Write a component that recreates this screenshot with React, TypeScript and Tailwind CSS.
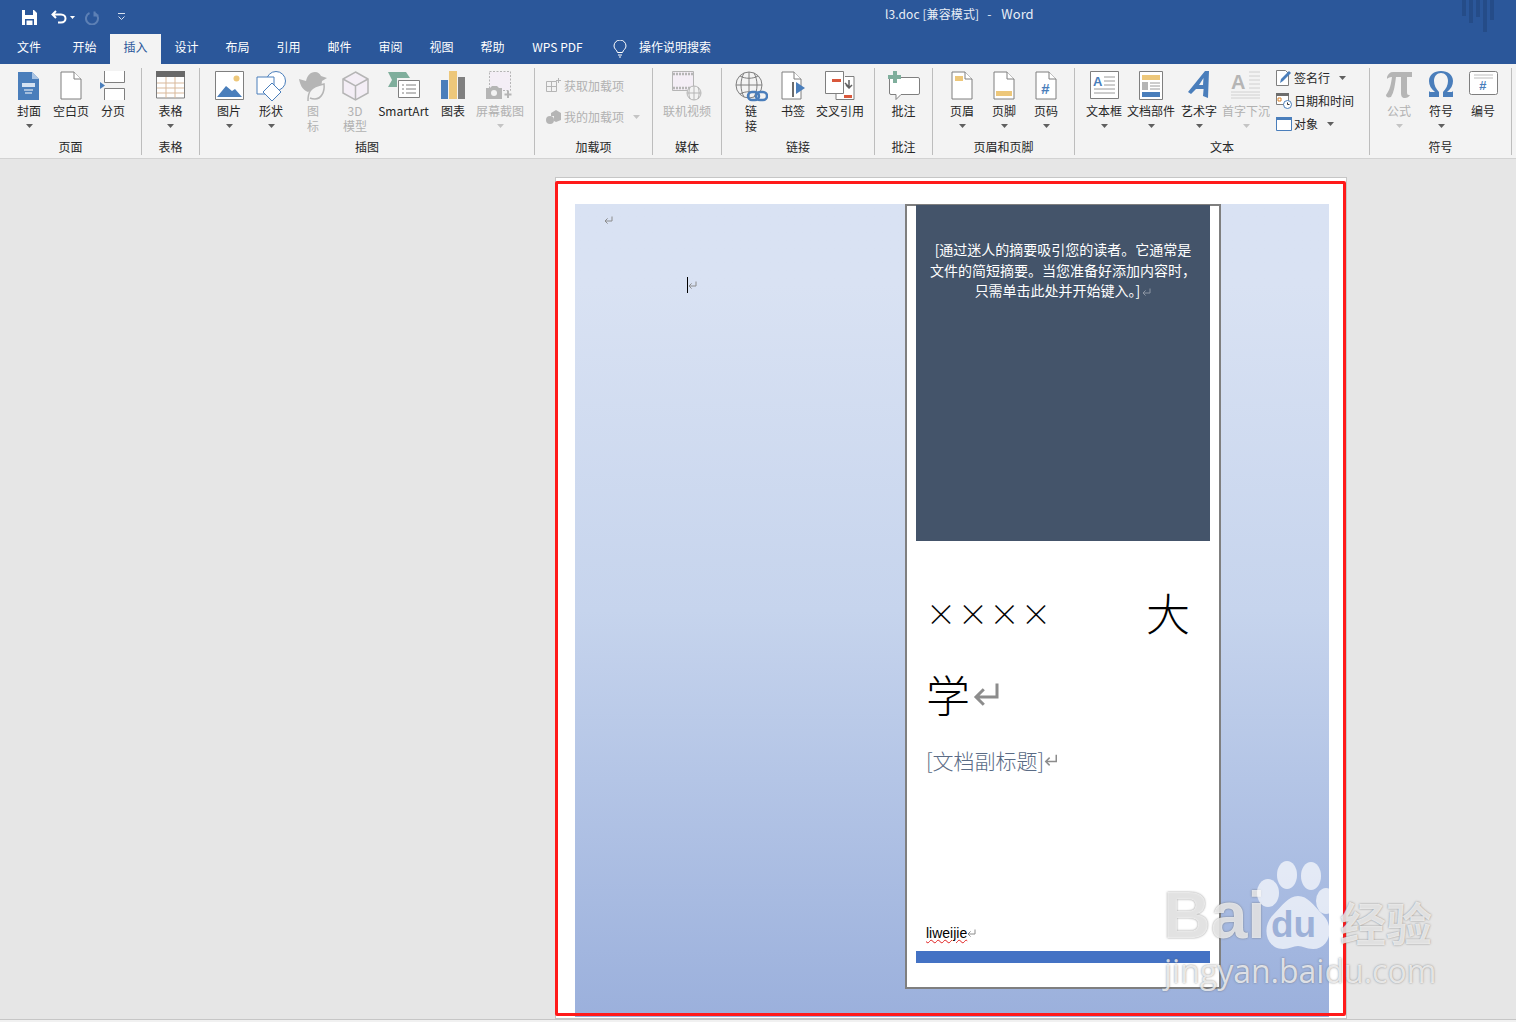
import React from 'react';

const FONT = '"Noto Sans CJK SC", "Noto Sans", sans-serif';

function Caret({ off }: { off?: boolean }) {
  return (
    <svg width="7" height="4" viewBox="0 0 7 4" className="block">
      <path d="M0 0h7L3.5 4z" fill={off ? '#c4c4c4' : '#5f5f5f'} />
    </svg>
  );
}

function ReturnMark({ w = 9, h = 8, color = '#8c8c8c', sw = 1 }: { w?: number; h?: number; color?: string; sw?: number }) {
  return (
    <svg width={w} height={h} viewBox="0 0 9 8" className="block shrink-0">
      <path d="M8 0.5V5H1.2M3.6 2.4L1 5l2.6 2.6" fill="none" stroke={color} strokeWidth={sw} />
    </svg>
  );
}

interface RibbonButtonProps {
  icon: React.ReactNode;
  label: string[];
  caret?: boolean;
  off?: boolean;
  className: string;
}

function RibbonButton({ icon, label, caret, off, className }: RibbonButtonProps) {
  return (
    <div className={`flex flex-col items-center ${className}`}>
      <div className="h-[32px] flex items-start justify-center">{icon}</div>
      {label.map((line) => (
        <div key={line} className={`text-[12px] leading-[15px] whitespace-nowrap ${off ? 'text-[#b1b1b1]' : 'text-[#262626]'}`}>
          {line}
        </div>
      ))}
      {caret && (
        <div className="mt-[6px]">
          <Caret off={off} />
        </div>
      )}
    </div>
  );
}

function Group({ label, className, children }: { label: string; className: string; children: React.ReactNode }) {
  return (
    <div className={`mt-[4px] h-[87px] flex flex-col shrink-0 border-r border-[#bdbdbd] ${className}`}>
      <div className="h-[71px] pt-[3px] flex">{children}</div>
      <div className="h-[16px] text-center text-[12px] leading-[16px] text-[#262626]">{label}</div>
    </div>
  );
}

const P = { s: '#7f7f7f', b: '#4a7ebb', o: '#edc77a', r: '#d9583c', g: '#b5b5b5', t: '#7fae9c' };

function Page({ children, fill = 'white', stroke = P.s }: { children?: React.ReactNode; fill?: string; stroke?: string }) {
  return (
    <svg width="22" height="29" viewBox="0 0 22 29">
      <path d="M1 1h13l7 7v20H1z" fill={fill} stroke={stroke} />
      <path d="M14 1v7h7" fill="white" stroke={stroke} />
      {children}
    </svg>
  );
}

const icons = {
  cover: (
    <svg width="22" height="29" viewBox="0 0 22 29">
      <path d="M0 1h14l7 7v21H0z" fill={P.b} />
      <path d="M14 1v7h7z" fill="#a9c4e4" />
      <path d="M4 12h13v4H4z" fill="#d5e2f2" />
      <path d="M6 19h9M7 22h7" stroke="white" />
    </svg>
  ),
  breakPage: (
    <svg width="26" height="29" viewBox="0 0 26 29">
      <path d="M4.500 0v11.500h20V0M4.500 29V17.500h20V29" fill="white" stroke={P.s} />
      <path d="M0 11l5 3.500L0 18z" fill={P.b} />
    </svg>
  ),
  table: (
    <svg width="29" height="28" viewBox="0 0 29 28">
      <path d="M.5 1h28v26H.5z" fill="white" stroke={P.s} />
      <path d="M0 0h29v6H0z" fill="#696969" />
      <path d="M1 12h27M1 17h27M1 22h27M10 6v21M19 6v21" stroke="#d9b99b" />
    </svg>
  ),
  picture: (
    <svg width="29" height="29" viewBox="0 0 29 29">
      <path d="M.5.500h28v28H.5z" fill="white" stroke={P.s} />
      <circle cx="21.500" cy="7.500" r="3" fill={P.o} />
      <path d="M2 26l9-11 6 5 3-2 7 8z" fill={P.b} />
    </svg>
  ),
  shapes: (
    <svg width="30" height="31" viewBox="0 0 30 31" fill="white" stroke={P.b}>
      <circle cx="20" cy="10" r="9.500" />
      <path d="M1 6h17v17H1z" />
      <path d="M16 12l9 9-9 9-9-9z" />
    </svg>
  ),
  icons3: (
    <svg width="29" height="31" viewBox="0 0 29 31">
      <path d="M0 8l7 2c1-5 4-9 9-9 3 0 5 2 6 4l6 2-5 3c0 4-2 7-5 9l-4-1-5 3C3 19 1 13 0 8z" fill={P.g} />
      <path d="M9 30c0-8 1-14 16-17 1 8-3 15-9 15-2 0-4-.500-5-1" fill="#f3f3f3" stroke={P.g} strokeWidth="1.500" />
    </svg>
  ),
  cube: (
    <svg width="27" height="30" viewBox="0 0 27 30" fill="#f4eef6" stroke={P.g} strokeWidth="1.500">
      <path d="M13.500 1L26 8v14l-12.500 7L1 22V8z" />
      <path d="M1 8l12.500 7L26 8M13.500 15v14" fill="none" />
    </svg>
  ),
  smartart: (
    <svg width="32" height="28" viewBox="0 0 32 28">
      <path d="M0 1h18l4 6H9v9H0l4-7z" fill={P.t} />
      <path d="M10.500 9.500h21v17h-21z" fill="white" stroke={P.s} />
      <path d="M14 14h2M18 14h10M14 18h2M18 18h10M14 22h2M18 22h10" stroke={P.s} />
    </svg>
  ),
  chart: (
    <svg width="24" height="28" viewBox="0 0 24 28">
      <path d="M0 9h7v19H0z" fill={P.b} />
      <path d="M8 0h8v28H8z" fill={P.o} />
      <path d="M17 6h7v22h-7z" fill="#7f7f7f" />
    </svg>
  ),
  shot: (
    <svg width="29" height="29" viewBox="0 0 29 29">
      <path d="M3.500.5h21v19h-21z" fill="#f4eef6" stroke={P.g} strokeDasharray="2 1.500" />
      <path d="M0 17h4l2-2h5l2 2h3v11H0z" fill={P.g} />
      <circle cx="8" cy="22" r="3" fill="#f3f3f3" />
      <path d="M22 20v7M18.500 23.500h7" stroke={P.g} strokeWidth="2" />
    </svg>
  ),
  video: (
    <svg width="30" height="30" viewBox="0 0 30 30">
      <path d="M.5.500h21v19H.5z" fill="#f4eef6" stroke={P.g} />
      <path d="M1 3h20M1 17h20" stroke={P.g} strokeWidth="2.500" strokeDasharray="2 1" />
      <circle cx="22" cy="22" r="7" fill="#f3f3f3" stroke={P.g} />
      <path d="M15 22h14M22 15v14M18 16c-1.500 4-1.500 8 0 12M26 16c1.500 4 1.500 8 0 12" fill="none" stroke={P.g} />
    </svg>
  ),
  link: (
    <svg width="33" height="32" viewBox="0 0 33 32">
      <circle cx="14" cy="14" r="13" fill="#f3f3f3" stroke={P.s} />
      <path d="M1 14h26M14 1v26M5 5c5 3 13 3 18 0M5 23c5-3 13-3 18 0M9 2c-4 7-4 17 0 24M19 2c4 7 4 17 0 24" fill="none" stroke={P.s} />
      <rect x="13" y="21" width="11" height="8" rx="4" fill="none" stroke={P.b} strokeWidth="2.500" />
      <rect x="21" y="21" width="11" height="8" rx="4" fill="none" stroke={P.b} strokeWidth="2.500" />
    </svg>
  ),
  bookmark: (
    <svg width="25" height="29" viewBox="0 0 25 29">
      <path d="M1 1h12l7 7v20H1z" fill="white" stroke={P.s} />
      <path d="M13 1v7h7" fill="white" stroke={P.s} />
      <path d="M12 11v15" stroke="#6d6d6d" strokeWidth="2" />
      <path d="M15 11l9 6-9 6z" fill={P.b} />
    </svg>
  ),
  cross: (
    <svg width="30" height="29" viewBox="0 0 30 29">
      <path d="M20 5.500h9v23H11v-6" fill="white" stroke={P.s} />
      <path d="M.5.500h18v22H.5z" fill="white" stroke={P.s} />
      <path d="M7 8h9v3H7zM19 24h8v3h-8z" fill={P.r} />
      <path d="M20 12l4 4 0-7M21 14l3 3 3-3" fill="none" stroke="#606060" strokeWidth="1.500" />
    </svg>
  ),
  comment: (
    <svg width="32" height="30" viewBox="0 0 32 30">
      <path d="M3 6.500h27a1.500 1.500 0 0 1 1.500 1.500v14a1.500 1.500 0 0 1-1.500 1.500H13l-5 5v-5H3A1.500 1.500 0 0 1 1.500 22V8A1.500 1.500 0 0 1 3 6.500z" fill="white" stroke={P.s} />
      <path d="M5 0h4v4h4v4H9v4H5V8H0V4h5z" fill={P.t} />
    </svg>
  ),
  textbox: (
    <svg width="29" height="28" viewBox="0 0 29 28">
      <path d="M.5.500h28v27H.5z" fill="white" stroke={P.s} />
      <path d="M14 6h11M14 10h11M14 14h11M4 18h21M4 22h21" stroke="#9a9a9a" />
      <text x="3" y="15" fontSize="13" fontFamily="Liberation Sans" fontWeight="700" fill={P.b}>A</text>
    </svg>
  ),
  parts: (
    <svg width="24" height="29" viewBox="0 0 24 29">
      <path d="M.5.500h23v28H.5z" fill="white" stroke={P.s} />
      <path d="M3 4h18v5H3z" fill={P.o} />
      <path d="M3 11h6v8H3z" fill={P.g} />
      <path d="M11 12h10M11 15h10M11 18h10" stroke="#9a9a9a" />
      <path d="M3 21h18v5H3z" fill={P.b} />
    </svg>
  ),
  wordart: (
    <svg width="22" height="28" viewBox="0 0 22 28">
      <path d="M17 0h4l-1 27-5-2 .600-7H8l-5 5-3-2zM15.500 7L11 14h4z" fill={P.b} />
    </svg>
  ),
  dropcap: (
    <svg width="30" height="29" viewBox="0 0 30 29">
      <text x="0" y="18" fontSize="20" fontFamily="Liberation Sans" fontWeight="700" fill={P.g}>A</text>
      <path d="M18 1h11M18 5h11M18 9h11M18 13h11M18 17h11M0 21h29M0 24h29M0 27h29" stroke="#d0d0d0" />
    </svg>
  ),
  pi: (
    <svg width="26" height="27" viewBox="0 0 26 27">
      <path d="M1 6c1-3 3-5 6-5h19v5h-5v15c0 3 1 3 3 3-1 2-3 3-5 3-3 0-4-2-4-5V6h-5c-1 8-2 15-5 20-3 1-5 0-5-2 4-5 5-11 6-18-3 0-4 1-5 2z" fill={P.g} />
    </svg>
  ),
  omega: (
    <svg width="26" height="27" viewBox="0 0 26 27">
      <path d="M1 26v-6l1 1h5C3 18 1 14 1 10 1 4 6 0 13 0s12 4 12 10c0 4-2 8-6 11h5l1-1v6H15v-5c3-3 5-7 5-11 0-5-3-8-7-8s-7 3-7 8c0 4 2 8 5 11v5z" fill={P.b} />
    </svg>
  ),
  number: (
    <svg width="29" height="24" viewBox="0 0 29 24">
      <rect x=".5" y=".5" width="28" height="23" rx="2" fill="white" stroke={P.s} />
      <path d="M5 4h19M5 7h19" stroke="#bdbdbd" />
      <text x="10" y="19" fontSize="13" fontFamily="Liberation Sans" fontWeight="700" fontStyle="italic" fill={P.b}>#</text>
    </svg>
  ),
};

function StackRow({ icon, label, caret, off, gap }: { icon: React.ReactNode; label: string; caret?: boolean; off?: boolean; gap: string }) {
  return (
    <div className="flex items-center h-[23px]">
      <div className="w-[17px] flex justify-center shrink-0">{icon}</div>
      <span className={`ml-[2px] text-[12px] whitespace-nowrap ${off ? 'text-[#b1b1b1]' : 'text-[#262626]'}`}>{label}</span>
      {caret && (
        <span className={gap}>
          <Caret off={off} />
        </span>
      )}
    </div>
  );
}

function Ribbon() {
  return (
    <div className="h-[95px] bg-[#f3f3f3] border-b border-[#d2d2d2] flex">
      <Group label="页面" className="w-[142px]">
        <div className="flex pl-[8px]">
          <RibbonButton className="w-[42px]" icon={icons.cover} label={['封面']} caret />
          <RibbonButton className="w-[42px]" icon={<Page />} label={['空白页']} />
          <RibbonButton className="w-[42px]" icon={icons.breakPage} label={['分页']} />
        </div>
      </Group>
      <Group label="表格" className="w-[58px]">
        <RibbonButton className="w-[57px]" icon={icons.table} label={['表格']} caret />
      </Group>
      <Group label="插图" className="w-[335px]">
        <div className="flex pl-[8px]">
          <RibbonButton className="w-[42px]" icon={icons.picture} label={['图片']} caret />
          <RibbonButton className="w-[42px]" icon={icons.shapes} label={['形状']} caret />
          <RibbonButton className="w-[42px]" icon={icons.icons3} label={['图', '标']} off />
          <RibbonButton className="w-[42px]" icon={icons.cube} label={['3D', '模型']} off />
          <RibbonButton className="w-[55px]" icon={icons.smartart} label={['SmartArt']} />
          <RibbonButton className="w-[44px]" icon={icons.chart} label={['图表']} />
          <RibbonButton className="w-[50px]" icon={icons.shot} label={['屏幕截图']} caret off />
        </div>
      </Group>
      <Group label="加载项" className="w-[118px]">
        <div className="pl-[10px] pt-[3px] flex flex-col gap-[8px]">
          <StackRow
            off
            gap=""
            label="获取加载项"
            icon={
              <svg width="15" height="15" viewBox="0 0 15 15" fill="none" stroke={P.g}>
                <path d="M.5 3.500h10v10H.5zM5.500 3.500v10M.5 8.500h10M12.500 0v5M10 2.500h5" />
              </svg>
            }
          />
          <StackRow
            off
            caret
            gap="ml-[9px]"
            label="我的加载项"
            icon={
              <svg width="15" height="14" viewBox="0 0 15 14" fill={P.g}>
                <path d="M5 3l5-3 5 3v7l-5 2-2-1V6H5z" />
                <circle cx="4" cy="10" r="4" />
              </svg>
            }
          />
        </div>
      </Group>
      <Group label="媒体" className="w-[69px]">
        <RibbonButton className="w-[68px]" icon={icons.video} label={['联机视频']} off />
      </Group>
      <Group label="链接" className="w-[153px]">
        <div className="flex pl-[8px]">
          <RibbonButton className="w-[42px]" icon={icons.link} label={['链', '接']} />
          <RibbonButton className="w-[42px]" icon={icons.bookmark} label={['书签']} />
          <RibbonButton className="w-[52px]" icon={icons.cross} label={['交叉引用']} />
        </div>
      </Group>
      <Group label="批注" className="w-[58px]">
        <RibbonButton className="w-[57px]" icon={icons.comment} label={['批注']} />
      </Group>
      <Group label="页眉和页脚" className="w-[142px]">
        <div className="flex pl-[8px]">
          <RibbonButton
            className="w-[42px]"
            caret
            label={['页眉']}
            icon={
              <Page>
                <path d="M4 5h8v5H4z" fill={P.o} />
              </Page>
            }
          />
          <RibbonButton
            className="w-[42px]"
            caret
            label={['页脚']}
            icon={
              <Page>
                <path d="M3 20h16v5H3z" fill={P.o} />
              </Page>
            }
          />
          <RibbonButton
            className="w-[42px]"
            caret
            label={['页码']}
            icon={
              <Page>
                <text x="6" y="23" fontSize="15" fontFamily="Liberation Sans" fontWeight="700" fontStyle="italic" fill={P.b}>#</text>
              </Page>
            }
          />
        </div>
      </Group>
      <Group label="文本" className="w-[295px]">
        <div className="flex pl-[8px]">
          <RibbonButton className="w-[42px]" icon={icons.textbox} label={['文本框']} caret />
          <RibbonButton className="w-[52px]" icon={icons.parts} label={['文档部件']} caret />
          <RibbonButton className="w-[44px]" icon={icons.wordart} label={['艺术字']} caret />
          <RibbonButton className="w-[50px]" icon={icons.dropcap} label={['首字下沉']} caret off />
          <div className="ml-[4px] -mt-[5px] flex flex-col">
            <StackRow
              caret
              gap="ml-[9px]"
              label="签名行"
              icon={
                <svg width="16" height="16" viewBox="0 0 16 16">
                  <path d="M.5.500h9l3 3v12H.5z" fill="white" stroke={P.s} />
                  <path d="M4 13l1-4 8-8 2 2-8 8z" fill={P.b} />
                </svg>
              }
            />
            <StackRow
              label="日期和时间"
              gap=""
              icon={
                <svg width="16" height="16" viewBox="0 0 16 16">
                  <path d="M.5.500h12v11H.5z" fill="white" stroke={P.s} />
                  <path d="M0 0h13v3H0z" fill="#6d6d6d" />
                  <path d="M2 5h3v3H2z" fill="none" stroke="#d9822b" />
                  <circle cx="11.500" cy="11.500" r="4" fill="white" stroke={P.b} />
                  <path d="M11.500 9.500v2h2" fill="none" stroke="#333" />
                </svg>
              }
            />
            <StackRow
              caret
              gap="ml-[9px]"
              label="对象"
              icon={
                <svg width="16" height="14" viewBox="0 0 16 14">
                  <path d="M.5.500h15v13H.5z" fill="white" stroke={P.b} />
                  <path d="M0 0h16v3H0z" fill={P.b} />
                </svg>
              }
            />
          </div>
        </div>
      </Group>
      <Group label="符号" className="w-[142px]">
        <div className="flex pl-[8px]">
          <RibbonButton className="w-[42px]" icon={icons.pi} label={['公式']} caret off />
          <RibbonButton className="w-[42px]" icon={icons.omega} label={['符号']} caret />
          <RibbonButton className="w-[42px]" icon={icons.number} label={['编号']} />
        </div>
      </Group>
    </div>
  );
}

function TitleBar() {
  const tabs = ['设计', '布局', '引用', '邮件', '审阅', '视图', '帮助'];
  return (
    <div className="h-[64px] bg-[#2b579a] text-white relative">
      <div className="h-[34px] flex items-center pl-[22px] relative">
        <svg width="15" height="15" viewBox="0 0 15 15">
          <path d="M0 0h12l3 3v12H0z" fill="white" />
          <path d="M3 0h8v5H3zM3 9h9v6H3z" fill="#2b579a" />
          <path d="M4.500 10.500h6v4.500h-6z" fill="white" />
        </svg>
        <svg width="17" height="14" viewBox="0 0 17 14" className="ml-[14px]" fill="none" stroke="white" strokeWidth="2">
          <path d="M5 1L1.500 4.500 5 8M2 4.500h8c6 0 6 8 0 8H7" />
        </svg>
        <svg width="5" height="3" viewBox="0 0 5 3" className="ml-[2px]">
          <path d="M0 0h5L2.500 3z" fill="white" />
        </svg>
        <svg width="15" height="15" viewBox="0 0 15 15" className="ml-[10px]" fill="none" stroke="#5d80b5" strokeWidth="2">
          <path d="M9.500 1.500v4h4M9.500 3a6 6 0 1 1-5 0" />
        </svg>
        <svg width="9" height="8" viewBox="0 0 9 8" className="ml-[17px]" fill="none" stroke="#d7e0ee">
          <path d="M1 .5h7M1.500 3.500L4.500 6.500 7.500 3.500" />
        </svg>
        <div className="absolute left-[885px] top-[6px] flex text-[12px] leading-[16px] whitespace-nowrap text-[#e8eef6]">
          <span className="tracking-[0.1px]">l3.doc [兼容模式]</span>
          <span className="ml-[8px]">-</span>
          <span className="ml-[10px] text-[13px]">Word</span>
        </div>
        <svg width="32" height="32" viewBox="0 0 32 32" className="absolute left-[1462px] top-0" fill="#254c88">
          <path d="M0 0h4v16H0zM7 0h4v23H7zM14 0h4v17h-4zM21 0h4v32h-4zM28 0h4v20h-4z" />
        </svg>
      </div>
      <div className="h-[30px] flex text-[12px] leading-[26px] -ml-px">
        <div className="w-[60px] text-center">文件</div>
        <div className="w-[51px] text-center">开始</div>
        <div className="w-[51px] text-center bg-[#f3f3f3] text-[#2b579a]">插入</div>
        {tabs.map((t) => (
          <div key={t} className="w-[51px] text-center">{t}</div>
        ))}
        <div className="w-[79px] text-center">WPS PDF</div>
        <div className="ml-[16px] flex items-start pt-[6px]">
          <svg width="14" height="18" viewBox="0 0 14 18" fill="none" stroke="white">
            <path d="M4.500 12.500C4 10 1 9 1 6a6 6 0 0 1 12 0c0 3-3 4-3.500 6.500zM5 15h4M6 17h2" />
          </svg>
        </div>
        <div className="ml-[12px]">操作说明搜索</div>
      </div>
    </div>
  );
}

function Watermark() {
  const edge = '[text-shadow:0_0_2px_rgba(90,90,90,0.7)]';
  return (
    <div className="absolute left-[1160px] top-[858px] w-[280px] h-[136px] text-white/75 pointer-events-none">
      <div className={`absolute left-[3px] top-[19px] text-[66px] leading-[76px] font-bold [font-family:'Liberation_Sans',sans-serif] ${edge}`}>Bai</div>
      <svg width="92" height="92" viewBox="0 0 92 92" className="absolute left-[95px] top-[2px]" fill="white" fillOpacity="0.68">
        <ellipse cx="13" cy="33" rx="11" ry="14" />
        <ellipse cx="32" cy="15" rx="10" ry="14" />
        <ellipse cx="56" cy="16" rx="10" ry="14" />
        <ellipse cx="71" cy="41" rx="10" ry="13" />
        <path d="M43 36c10 0 15 9 25 19 12 12 7 34-10 34-7 0-10-3-15-3s-8 3-15 3C11 89 6 67 18 55c9-9 15-19 25-19z" />
      </svg>
      <div className="absolute left-[111px] top-[47px] text-[37px] leading-[40px] font-bold text-[#7f98cc]/70 [font-family:'Liberation_Sans',sans-serif]">du</div>
      <div className={`absolute left-[180px] top-[35px] text-[46px] leading-[56px] font-bold whitespace-nowrap ${edge}`}>经验</div>
      <div className={`absolute left-[4px] top-[95px] text-[32px] leading-[36px] whitespace-nowrap [font-family:'Open_Sans',sans-serif] ${edge}`}>jingyan.baidu.com</div>
    </div>
  );
}

function Document() {
  return (
    <div className="ml-[555px] w-[792px] h-[842px] bg-white border border-[#c6c6c6] pl-[19px] pr-[17px] pt-[26px] overflow-hidden">
      <div className="h-[813px] bg-linear-to-b from-[#d9e2f3] from-10% via-[#c6d4ed] via-50% to-[#9bb0dc] relative flex justify-end pr-[108px]">
        <div className="absolute left-[29px] top-[12px]">
          <ReturnMark />
        </div>
        <div className="absolute left-[112px] top-[73px] flex items-center">
          <div className="w-px h-[16px] bg-black" />
          <ReturnMark />
        </div>
        <div className="w-[316px] h-[785px] bg-white border-2 border-[#7f7f7f] px-[9px]">
          <div className="-mt-[1px] h-[336px] bg-[#44546a] text-white text-[14px] leading-[20.500px] text-center px-[12px] pt-[34px]">
            <span>[通过迷人的摘要吸引您的读者。它通常是文件的简短摘要。当您准备好添加内容时，只需单击此处并开始键入。]</span>
            <span className="inline-block ml-[2px]">
              <ReturnMark color="#8c95a3" />
            </span>
          </div>
          <div className="pt-[33px]">
            <div className="ml-[12px] mr-[20px] flex justify-between items-center h-[76px] text-[44px] leading-[76px] text-black">
              <span className="flex -ml-[3px]">
                <span className="w-[32px] text-center text-[30px] font-light">×</span>
                <span className="w-[32px] text-center text-[30px] font-light">×</span>
                <span className="w-[31px] text-center text-[30px] font-light">×</span>
                <span className="w-[32px] text-center text-[30px] font-light">×</span>
              </span>
              <span className="font-light">大</span>
            </div>
            <div className="ml-[10px] mt-[2px] flex items-center h-[84px] text-[44px] leading-[84px] text-black">
              <span className="font-light">学</span>
              <span className="ml-[3px]">
                <ReturnMark w={27} h={24} sw={1} />
              </span>
            </div>
            <div className="ml-[10px] mt-[10px] flex items-center text-[21px] leading-[28px] text-[#5a6b85]">
              <span className="font-light">[文档副标题]</span>
              <ReturnMark w={14} h={12} />
            </div>
          </div>
          <div className="mt-[150px] pl-[10px] flex items-center h-[18px] text-[14px] leading-[18px] text-black">
            <span className="underline decoration-wavy decoration-[#e02020] decoration-1 [font-family:'Liberation_Sans',sans-serif]">liweijie</span>
            <ReturnMark />
          </div>
          <div className="mt-[9px] h-[12px] bg-[#4472c4]" />
        </div>
      </div>
    </div>
  );
}

export default function App() {
  return (
    <div className="w-[1516px] h-[1022px] bg-[#e6e6e6] overflow-hidden relative" style={{ fontFamily: FONT }}>
      <TitleBar />
      <Ribbon />
      <div className="pt-[18px]">
        <Document />
      </div>
      <div className="absolute left-0 top-[1019px] w-full h-[3px] bg-[#f1f1f1] border-t border-[#c6c6c6]" />
      {/* red annotation drawn on the screenshot */}
      <div className="absolute left-[555px] top-[181px] w-[791px] h-[835px] border-[3px] border-[#ff1a1a] rounded-[2px]" />
      <Watermark />
    </div>
  );
}
